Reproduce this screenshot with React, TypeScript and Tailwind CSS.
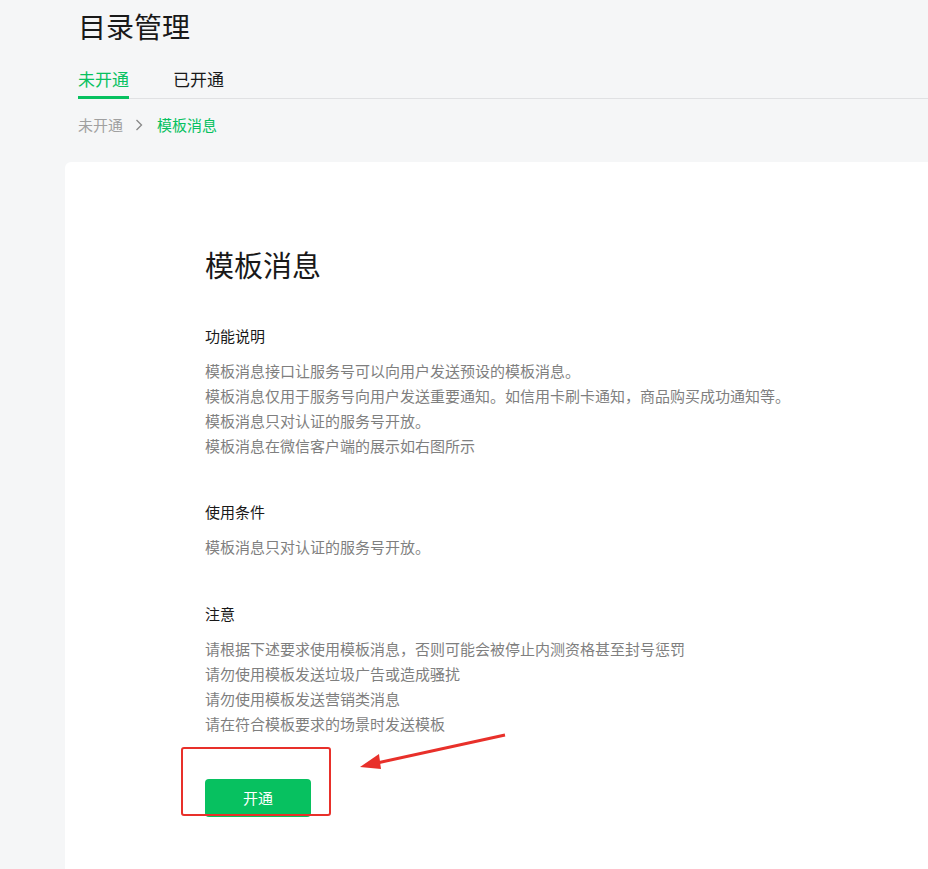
export default function App() {
  const f = { fontFamily: '"Noto Sans CJK SC", "Liberation Sans", sans-serif' };
  return (
    <div style={f} className="w-[928px] h-[869px] overflow-hidden bg-[#f5f6f7] text-[#191919]">
      <div className="pl-[78px] pt-[6px]">
        <div className="text-[28px] leading-[40px]">目录管理</div>
        <div className="mt-[21px] flex gap-[44px] border-b border-[#e0e1e3] text-[17px] leading-[24px]">
          <div className="text-[#07c160] border-b-[3px] border-[#07c160] pb-[5px] -mb-px">未开通</div>
          <div className="pb-[5px]">已开通</div>
        </div>
        <div className="mt-[16px] flex items-center text-[15px] leading-[20px]">
          <span className="text-[#a0a0a0]">未开通</span>
          <span className="mx-[12px] text-[#888]">
            <svg width="8" height="12" viewBox="0 0 8 12"><path d="M1.5 1l5 5-5 5" fill="none" stroke="#888" strokeWidth="1.3" /></svg>
          </span>
          <span className="text-[#07c160] ml-[2px]">模板消息</span>
        </div>
      </div>
      <div className="ml-[65px] mt-[27px] w-[900px] h-[720px] bg-white rounded-[6px] relative pl-[140px] pt-[78px]">
        <div className="text-[29px] leading-[48px]">模板消息</div>
        <div className="mt-[38px] text-[15px] leading-[20px]">功能说明</div>
        <div className="mt-[12px] text-[15px] leading-[25px] text-[#7f7f7f]">
          <div>模板消息接口让服务号可以向用户发送预设的模板消息。</div>
          <div>模板消息仅用于服务号向用户发送重要通知。如信用卡刷卡通知，商品购买成功通知等。</div>
          <div>模板消息只对认证的服务号开放。</div>
          <div>模板消息在微信客户端的展示如右图所示</div>
        </div>
        <div className="mt-[44px] text-[15px] leading-[20px]">使用条件</div>
        <div className="mt-[12px] text-[15px] leading-[25px] text-[#7f7f7f]">模板消息只对认证的服务号开放。</div>
        <div className="mt-[45px] text-[15px] leading-[20px]">注意</div>
        <div className="mt-[12px] text-[15px] leading-[25px] text-[#7f7f7f]">
          <div>请根据下述要求使用模板消息，否则可能会被停止内测资格甚至封号惩罚</div>
          <div>请勿使用模板发送垃圾广告或造成骚扰</div>
          <div>请勿使用模板发送营销类消息</div>
          <div>请在符合模板要求的场景时发送模板</div>
        </div>
        <div className="mt-[43px] w-[106px] h-[38px] rounded-[4px] bg-[#07c160] text-white text-[15px] flex items-center justify-center">开通</div>
        <div className="absolute left-[116px] top-[585px] w-[150px] h-[69px] border-[2px] border-[#e8302a] rounded-[3px]" />
        <svg className="absolute left-[290px] top-[568px]" width="160" height="45" viewBox="0 0 160 45">
          <path d="M150 5 L22 33" stroke="#e8302a" strokeWidth="3" />
          <path d="M5 37 L24 24 L26 39 Z" fill="#e8302a" />
        </svg>
      </div>
    </div>
  );
}
